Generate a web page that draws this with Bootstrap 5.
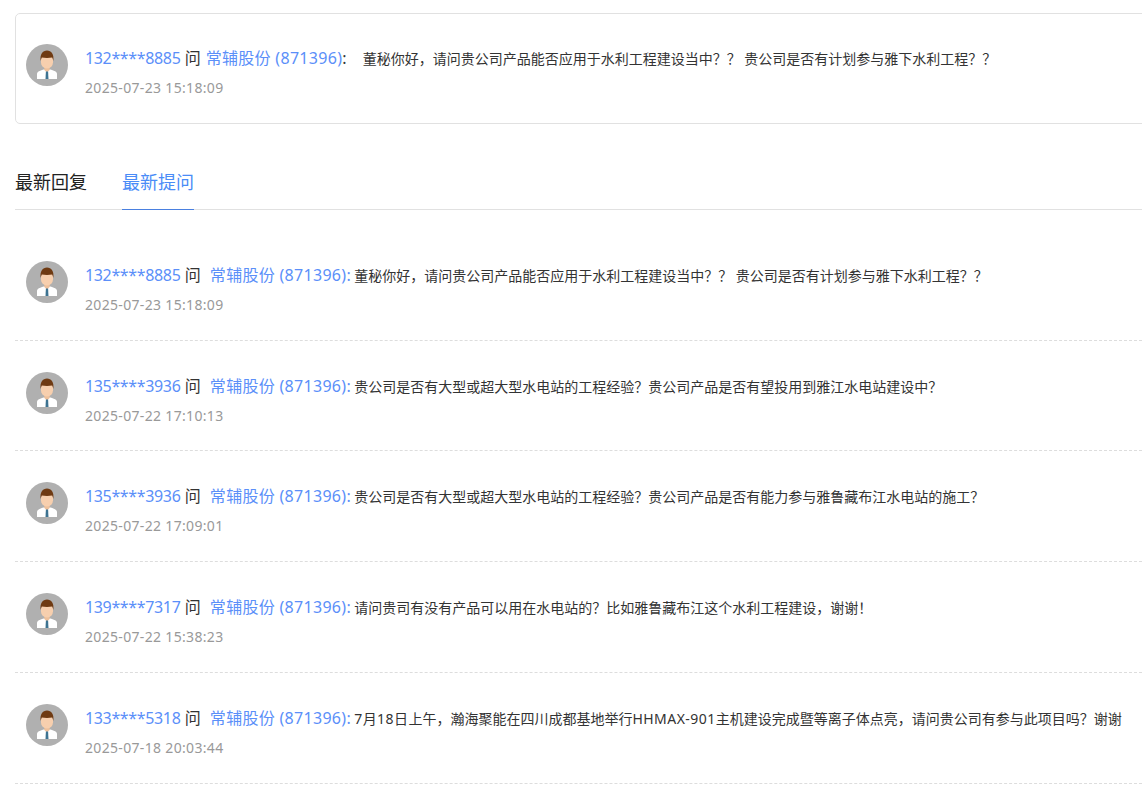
<!DOCTYPE html>
<html lang="zh-CN">
<head>
    <meta charset="UTF-8">
    <meta name="viewport" content="width=device-width, initial-scale=1.0">
    <title>最新提问</title>
    <link href="https://cdn.jsdelivr.net/npm/bootstrap@5.3.3/dist/css/bootstrap.min.css" rel="stylesheet">
    <style>
        html, body {
            overflow: hidden;
            height: 786px;
        }
        body {
            font-family: "Noto Sans", "Noto Sans CJK SC", sans-serif;
            color: #333;
            background: #fff;
        }
        .page-wrap {
            padding: 13px 0 0 15px;
            width: 1142px;
        }
        .top-box {
            width: 1140px;
            height: 111px;
            border: 1px solid #e1e1e1;
            border-radius: 5px;
            padding: 30px 10px 0;
        }
        .qa-row {
            display: flex;
            gap: 17px;
        }
        .avatar {
            width: 42px;
            height: 42px;
            flex: none;
        }
        .qa-body {
            white-space: nowrap;
            min-width: 0;
        }
        .qa-line {
            font-size: 16px;
            line-height: 28px;
        }
        .who {
            color: #5b8ff9;
            text-decoration: none;
        }
        .who-name {
            letter-spacing: -.35px;
        }
        .who-firm {
            letter-spacing: .3px;
        }
        .asked {
            color: #333;
            margin: 0 5px 0 0;
        }
        .words {
            font-size: 14px;
            color: #333;
        }
        .top-box .words {
            margin-left: 12px;
        }
        .qa-item .words {
            margin-left: -1px;
        }
        .latin-run {
            letter-spacing: .45px;
        }
        .stamp {
            font-size: 14px;
            line-height: 20px;
            color: #999;
            margin-top: 5px;
            letter-spacing: .33px;
        }
        .tab-strip {
            margin-top: 36px;
            height: 50px;
            border-bottom: 1px solid #e1e1e1;
            gap: 35px;
        }
        .tab-item {
            font-size: 18px;
            line-height: 26px;
            height: 50px;
            padding-top: 9px;
            color: #222;
            text-decoration: none;
        }
        .tab-item.active-tab {
            color: #4a8cf7;
            border-bottom: 1px solid #4a80e0;
        }
        .qa-list {
            margin-top: 38px;
        }
        .qa-item {
            height: 110.75px;
            padding: 31px 11px 0;
            border-bottom: 1px dashed #ddd;
        }
        .qa-item:first-child {
            height: 92.6px;
            padding-top: 13px;
        }
    </style>
</head>
<body>
    <svg width="0" height="0" class="position-absolute">
        <symbol id="man" viewBox="0 0 42 42">
            <circle cx="21" cy="21" r="21" fill="#b0b0b0"/>
            <path d="M11 35v-5c0-2.300 2.500-3.200 6.500-4.500h7c4 1.300 6.500 2.200 6.500 4.500v5z" fill="#fff"/>
            <path d="M18.300 21h5.400v5l-2.700 2.500-2.700-2.500z" fill="#eec19c"/>
            <path d="M19.900 27.500h2.200l.4 7.500h-3z" fill="#3d7391"/>
            <rect x="15" y="10" width="12" height="14.500" rx="6" fill="#f7cfae"/>
            <path d="M14.700 17c-1-6.500 2-10.500 6.300-10.500s7.300 4 6.300 10.500c-.3-1.500-.6-2.800-1.100-3.500-2.800.6-7.600.6-10.400 0-.5.700-.8 2-1.100 3.500z" fill="#6f3a12"/>
        </symbol>
    </svg>

    <div class="page-wrap">
        <div class="top-box">
            <div class="qa-row">
                <svg class="avatar"><use href="#man"/></svg>
                <div class="qa-body">
                    <div class="qa-line"><a class="who who-name" href="#">132****8885</a> <span class="asked">问</span><a class="who who-firm" href="#">常辅股份 (871396)</a>: <span class="words">董秘你好，请问贵公司产品能否应用于水利工程建设当中？？ 贵公司是否有计划参与雅下水利工程？？</span></div>
                    <div class="stamp">2025-07-23 15:18:09</div>
                </div>
            </div>
        </div>

        <div class="tab-strip d-flex">
            <a class="tab-item" href="#">最新回复</a>
            <a class="tab-item active-tab" href="#">最新提问</a>
        </div>

        <div class="qa-list" id="qaList"></div>
    </div>

    <script>
        const questions = [
            ['132****8885', '董秘你好，请问贵公司产品能否应用于水利工程建设当中？？ 贵公司是否有计划参与雅下水利工程？？', '2025-07-23 15:18:09'],
            ['135****3936', '贵公司是否有大型或超大型水电站的工程经验？贵公司产品是否有望投用到雅江水电站建设中？', '2025-07-22 17:10:13'],
            ['135****3936', '贵公司是否有大型或超大型水电站的工程经验？贵公司产品是否有能力参与雅鲁藏布江水电站的施工？', '2025-07-22 17:09:01'],
            ['139****7317', '请问贵司有没有产品可以用在水电站的？比如雅鲁藏布江这个水利工程建设，谢谢！', '2025-07-22 15:38:23'],
            ['133****5318', '<span class="latin-run">7月18日</span>上午，瀚海聚能在四川成都基地举行<span class="latin-run">HHMAX-901</span>主机建设完成暨等离子体点亮，请问贵公司有参与此项目吗？谢谢', '2025-07-18 20:03:44']
        ];
        document.getElementById('qaList').innerHTML = questions.map(q => `
            <div class="qa-item">
                <div class="qa-row">
                    <svg class="avatar"><use href="#man"/></svg>
                    <div class="qa-body">
                        <div class="qa-line"><a class="who who-name" href="#">${q[0]}</a> <span class="asked">问</span> <a class="who who-firm" href="#">常辅股份 (871396):</a> <span class="words">${q[1]}</span></div>
                        <div class="stamp">${q[2]}</div>
                    </div>
                </div>
            </div>`).join('');
    </script>
    <script src="https://cdn.jsdelivr.net/npm/bootstrap@5.3.3/dist/js/bootstrap.bundle.min.js"></script>
</body>
</html>
